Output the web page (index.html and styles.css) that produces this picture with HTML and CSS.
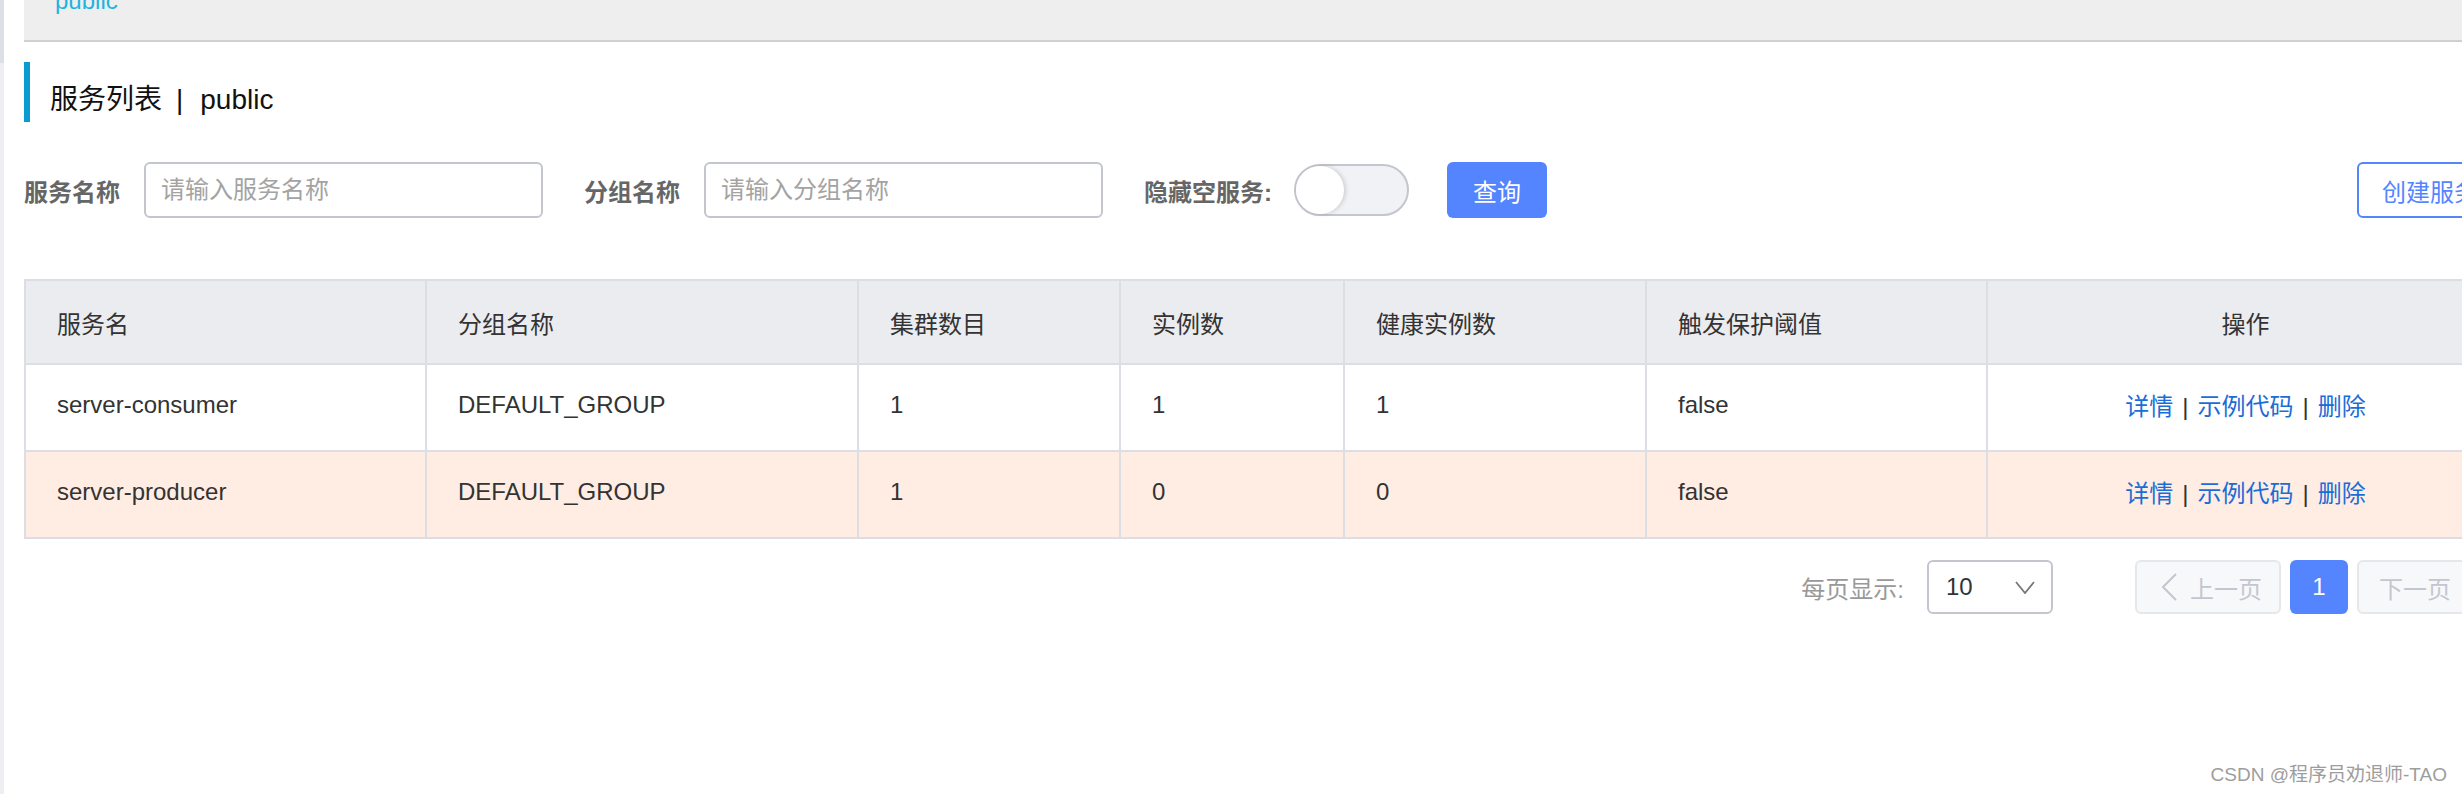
FILE: index.html
```html
<!DOCTYPE html>
<html lang="zh-CN">
<head>
<meta charset="utf-8">
<title>服务列表</title>
<link rel="stylesheet" href="styles.css">
</head>
<body>
<div class="edge"></div>
<main class="main">
  <div class="ns-bar"><span class="ns-name">public</span></div>

  <h1 class="page-title">服务列表<span class="title-sep">|</span>public</h1>

  <form class="filters">
    <div class="field">
      <label class="field-label">服务名称</label>
      <input class="text-input" type="text" placeholder="请输入服务名称">
    </div>
    <div class="field">
      <label class="field-label">分组名称</label>
      <input class="text-input" type="text" placeholder="请输入分组名称">
    </div>
    <div class="field field-switch">
      <label class="field-label">隐藏空服务:</label>
      <span class="switch"><span class="switch-knob"></span></span>
    </div>
    <button class="btn btn-primary" type="button">查询</button>
    <button class="btn btn-outline" type="button">创建服务</button>
  </form>

  <table class="svc-table">
    <colgroup>
      <col class="c1"><col class="c2"><col class="c3"><col class="c4"><col class="c5"><col class="c6"><col class="c7">
    </colgroup>
    <thead>
      <tr>
        <th>服务名</th>
        <th>分组名称</th>
        <th>集群数目</th>
        <th>实例数</th>
        <th>健康实例数</th>
        <th>触发保护阈值</th>
        <th class="center">操作</th>
      </tr>
    </thead>
    <tbody>
      <tr>
        <td>server-consumer</td>
        <td>DEFAULT_GROUP</td>
        <td>1</td>
        <td>1</td>
        <td>1</td>
        <td>false</td>
        <td class="center"><a class="op-link">详情</a><span class="op-sep">|</span><a class="op-link">示例代码</a><span class="op-sep">|</span><a class="op-link">删除</a></td>
      </tr>
      <tr class="row-warn">
        <td>server-producer</td>
        <td>DEFAULT_GROUP</td>
        <td>1</td>
        <td>0</td>
        <td>0</td>
        <td>false</td>
        <td class="center"><a class="op-link">详情</a><span class="op-sep">|</span><a class="op-link">示例代码</a><span class="op-sep">|</span><a class="op-link">删除</a></td>
      </tr>
    </tbody>
  </table>

  <div class="pager">
    <span class="pager-label">每页显示:</span>
    <div class="select">
      <span class="select-value">10</span>
      <svg class="select-arrow" width="20" height="13" viewBox="0 0 20 13"><path d="M1 1 L10 12 L19 1" fill="none" stroke="#777" stroke-width="1.8"/></svg>
    </div>
    <div class="pages">
      <button class="page-btn page-prev" type="button"><svg class="page-arrow" width="16" height="28" viewBox="0 0 16 28"><path d="M15 1 L2 14 L15 27" fill="none" stroke="#c4c6cf" stroke-width="2"/></svg>上一页</button>
      <button class="page-btn page-current" type="button">1</button>
      <button class="page-btn page-next" type="button">下一页<svg class="page-arrow next-arrow" width="16" height="28" viewBox="0 0 16 28"><path d="M1 1 L14 14 L1 27" fill="none" stroke="#c4c6cf" stroke-width="2"/></svg></button>
    </div>
  </div>
</main>
<div class="watermark">CSDN @程序员劝退师-TAO</div>
</body>
</html>
```

FILE: styles.css
```css
html, body {
  margin: 0;
  padding: 0;
  height: 100%;
  background: #ffffff;
  overflow: hidden;
}

body {
  display: flex;
  font-family: "Liberation Sans", "Noto Sans CJK SC", sans-serif;
  color: #333333;
  position: relative;
}

.edge {
  flex: none;
  width: 4px;
  background: linear-gradient(to bottom, #dcdfe5 0, #dcdfe5 63px, #eceef2 63px, #eceef2 100%);
}

.main {
  flex: none;
  width: 2479px;
  padding-left: 20px;
}

.ns-bar {
  height: 40px;
  width: 2600px;
  background: #eeeeee;
  border-bottom: 2px solid #d0d0d0;
  padding-left: 31px;
  overflow: hidden;
}

.ns-name {
  display: block;
  margin-top: -11px;
  font-size: 24px;
  line-height: 24px;
  color: #1fb3e0;
}

.page-title {
  margin: 20px 0 0 0;
  height: 60px;
  border-left: 6px solid #0a9bd0;
  padding-left: 20px;
  font-size: 28px;
  font-weight: normal;
  line-height: 76px;
  color: #111111;
}

.title-sep {
  margin: 0 17px 0 14px;
}

.filters {
  display: flex;
  align-items: center;
  margin-top: 40px;
  height: 56px;
}

.field {
  display: flex;
  align-items: center;
  margin-right: 41px;
}

.field-switch {
  margin-right: 38px;
}

.field-label {
  font-size: 24px;
  font-weight: 700;
  color: #666666;
  margin-right: 24px;
}

.field-switch .field-label {
  margin-right: 22px;
}

.text-input {
  box-sizing: border-box;
  width: 399px;
  height: 56px;
  border: 2px solid #c4c6cf;
  border-radius: 6px;
  padding: 0 15px;
  font-family: "Liberation Sans", "Noto Sans CJK SC", sans-serif;
  font-size: 24px;
  color: #333333;
  outline: none;
}

.text-input::placeholder {
  color: #a3a3a3;
}

.switch {
  box-sizing: border-box;
  display: block;
  width: 115px;
  height: 52px;
  border: 2px solid #c4c6cf;
  border-radius: 26px;
  background: #f1f2f6;
  padding: 0;
}

.switch-knob {
  display: block;
  width: 48px;
  height: 48px;
  border-radius: 50%;
  background: #ffffff;
  box-shadow: 2px 0 4px rgba(0, 0, 0, 0.14);
}

.btn {
  box-sizing: border-box;
  height: 56px;
  border-radius: 6px;
  font-family: "Liberation Sans", "Noto Sans CJK SC", sans-serif;
  font-size: 24px;
  padding: 0;
  cursor: pointer;
}

.btn-primary {
  width: 100px;
  background: #5584ff;
  border: none;
  color: #ffffff;
}

.btn-outline {
  margin-left: auto;
  width: 146px;
  background: #ffffff;
  border: 2px solid #5584ff;
  color: #5584ff;
}

.svc-table {
  margin-top: 61px;
  width: 2479px;
  border-collapse: collapse;
  table-layout: fixed;
  font-size: 24px;
}

.c1 { width: 401px; }
.c2 { width: 432px; }
.c3 { width: 262px; }
.c4 { width: 224px; }
.c5 { width: 302px; }
.c6 { width: 341px; }
.c7 { width: 517px; }

.svc-table th,
.svc-table td {
  border: 2px solid #dcdee3;
  height: 82px;
  padding: 0 31px;
  text-align: left;
  color: #333333;
  font-weight: normal;
  white-space: nowrap;
}

.svc-table th {
  background: #ebecf0;
}

.svc-table td {
  background: #ffffff;
  padding-bottom: 6px;
  height: 79px;
}

.svc-table .row-warn td {
  background: #ffece3;
}

.svc-table .center {
  text-align: center;
}

.op-link {
  color: #1a6dd6;
  text-decoration: none;
  cursor: pointer;
}

.op-sep {
  margin: 0 9px;
  color: #333333;
}

.pager {
  display: flex;
  align-items: center;
  justify-content: flex-end;
  margin-top: 21px;
  height: 54px;
}

.pager-label {
  font-size: 24px;
  color: #999999;
  margin-right: 23px;
}

.select {
  box-sizing: border-box;
  display: flex;
  align-items: center;
  justify-content: space-between;
  width: 126px;
  height: 54px;
  border: 2px solid #c4c6cf;
  border-radius: 6px;
  padding: 0 16px 0 17px;
  font-size: 24px;
  color: #333333;
  margin-right: 82px;
}

.pages {
  display: flex;
  gap: 9px;
}

.page-btn {
  box-sizing: border-box;
  height: 54px;
  border-radius: 6px;
  font-family: "Liberation Sans", "Noto Sans CJK SC", sans-serif;
  font-size: 24px;
  display: flex;
  align-items: center;
  padding: 0;
}

.page-prev,
.page-next {
  width: 146px;
  background: #f7f8fa;
  border: 2px solid #e6e7eb;
  color: #c4c6cf;
}

.page-prev {
  padding-left: 24px;
}

.page-prev .page-arrow {
  margin-right: 13px;
}

.page-next {
  padding-left: 20px;
}

.next-arrow {
  margin-left: 13px;
}

.page-current {
  width: 58px;
  justify-content: center;
  background: #5584ff;
  border: none;
  color: #ffffff;
}

.watermark {
  position: absolute;
  right: 15px;
  bottom: 8px;
  font-size: 19px;
  line-height: 22px;
  color: #9d9d9d;
  text-shadow: 0 0 1px #ffffff;
}
```
